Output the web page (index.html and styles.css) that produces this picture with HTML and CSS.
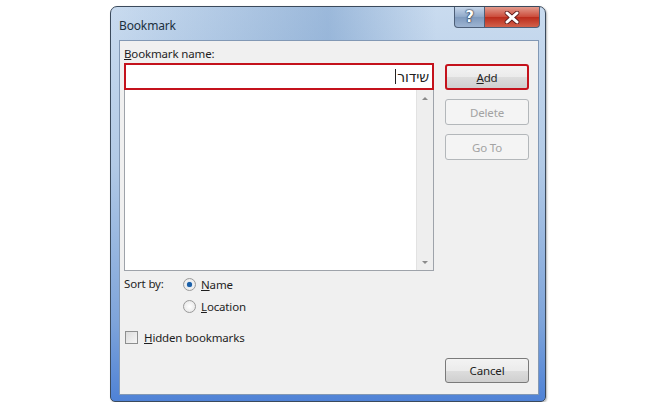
FILE: index.html
```html
<!DOCTYPE html>
<html lang="en">

<head>
  <meta charset="UTF-8" />
  <title>Bookmark</title>
  <link rel="stylesheet" href="styles.css">
</head>

<body>
  <div class="window">
    <!-- title bar -->
    <div class="titlebar">
      <span class="title">Bookmark</span>
      <div class="caption-btns">
        <div class="cap-btn help">?</div>
        <div class="cap-btn close">
          <svg width="16" height="13" viewBox="0 0 16 13">
            <path d="M3 2 L13 11 M13 2 L3 11" stroke="#5a1b1b" stroke-width="4.6" stroke-linecap="round" />
            <path d="M3 2 L13 11 M13 2 L3 11" stroke="#ffffff" stroke-width="3" stroke-linecap="round" />
          </svg>
        </div>
      </div>
    </div>

    <div class="client">
      <div class="main">
        <div class="left">
          <div class="label"><u>B</u>ookmark name:</div>
          <div class="name-box highlight">
            <span class="caret"></span><span dir="rtl">שידור</span>
          </div>
          <div class="list-box">
            <div class="scrollbar">
              <span class="arrow up"></span>
              <span class="arrow down"></span>
            </div>
          </div>

          <div class="sort">
            <span class="sort-label">Sort by:</span>
            <div class="radios">
              <label class="radio"><span class="dot checked"></span><span><u>N</u>ame</span></label>
              <label class="radio"><span class="dot"></span><span><u>L</u>ocation</span></label>
            </div>
          </div>

          <label class="check"><span class="box"></span><span><u>H</u>idden bookmarks</span></label>
        </div>

        <div class="right">
          <button class="btn highlight"><u>A</u>dd</button>
          <button class="btn disabled">Delete</button>
          <button class="btn disabled">Go To</button>
        </div>
      </div>

      <div class="footer">
        <button class="btn">Cancel</button>
      </div>
    </div>
  </div>
</body>

</html>
```

FILE: styles.css
```css
* {
  margin: 0;
  padding: 0;
  box-sizing: border-box;
}

body {
  background-color: #ffffff;
  padding: 6px 0 0 110px;
  font-family: 'Noto Sans', 'DejaVu Sans', sans-serif;
  font-size: 11.5px;
  letter-spacing: -0.15px;
  color: #1e1e1e;
}

u {
  text-decoration: underline;
  text-underline-offset: 1px;
}

/* Window frame */
.window {
  width: 436px;
  height: 396px;
  border: 1px solid #3b4a5c;
  border-radius: 7px 7px 5px 5px;
  background: linear-gradient(to bottom, #c9dbef 0%, #b2cae6 40%, #7ea4da 80%, #4f82d6 100%);
  padding: 0 6px 6px 8px;
  display: flex;
  flex-direction: column;
  box-shadow: 1px 1px 2px rgba(0, 0, 0, 0.3);
}

.titlebar {
  height: 33px;
  display: flex;
  justify-content: space-between;
  align-items: flex-start;
  background: linear-gradient(to right, rgba(255, 255, 255, 0) 0%, rgba(70, 120, 180, 0.35) 50%, rgba(255, 255, 255, 0) 75%);
  margin: 0 -6px 0 -8px;
  padding: 0 6px 0 8px;
  border-radius: 6px 6px 0 0;
}

.title {
  margin-top: 10px;
  font-size: 12px;
  color: #20303e;
}

.caption-btns {
  display: flex;
}

.cap-btn {
  height: 21px;
  display: flex;
  align-items: center;
  justify-content: center;
  border: 1px solid #4d5f78;
  border-top: none;
}

.help {
  width: 31px;
  border-radius: 0 0 0 4px;
  background: linear-gradient(to bottom, #c6d6ea, #8fa8c8 50%, #7f9abd 51%, #9db4d2);
  color: #ffffff;
  font-family: 'DejaVu Sans', sans-serif;
  font-weight: bold;
  font-size: 15px;
  text-shadow: 0 0 2px #22334a, 0 0 1px #22334a, 0 0 1px #22334a;
}

.close {
  width: 55px;
  border-left: none;
  margin-right: -1px;
  border-radius: 0 0 4px 0;
  background: linear-gradient(to bottom, #e39b8d, #cb4b3a 50%, #bb2c1c 51%, #d2614b);
}

/* client area */
.client {
  flex: 1;
  background-color: #f0f0f0;
  border: 1px solid #8298b4;
  padding: 5px 9px 11px 4px;
  display: flex;
  flex-direction: column;
}

.main {
  display: flex;
  gap: 11px;
  flex: 1;
}

.left {
  width: 311px;
  display: flex;
  flex-direction: column;
}

.label {
  height: 17px;
}

.highlight {
  border: 2px solid #c4121c !important;
}

.name-box {
  height: 27px;
  background: #ffffff;
  display: flex;
  justify-content: flex-end;
  align-items: center;
  padding: 0 3px;
  font-size: 14px;
  color: #222;
}

.caret {
  width: 1px;
  height: 15px;
  background: #222;
  margin-right: 1px;
}

.list-box {
  height: 181px;
  background: #ffffff;
  border: 1px solid #9ea3aa;
  border-top: none;
  display: flex;
  justify-content: flex-end;
}

.scrollbar {
  width: 17px;
  background: #eeeeee;
  border-left: 1px solid #e2e2e2;
  display: flex;
  flex-direction: column;
  justify-content: space-between;
  align-items: center;
  padding: 7px 0 6px;
}

.arrow {
  width: 0;
  height: 0;
  border-left: 3px solid transparent;
  border-right: 3px solid transparent;
}

.arrow.up {
  border-bottom: 3px solid #8a8a8a;
}

.arrow.down {
  border-top: 3px solid #8a8a8a;
}

/* sort by radios */
.sort {
  display: flex;
  margin-top: 5px;
}

.sort-label {
  width: 59px;
}

.radios {
  display: flex;
  flex-direction: column;
  gap: 6px;
}

.radio,
.check {
  display: flex;
  align-items: center;
  gap: 5px;
  height: 16px;
}

.dot {
  width: 13px;
  height: 13px;
  border-radius: 50%;
  border: 1px solid #9a9a9a;
  background: radial-gradient(circle, #ffffff 0%, #e2e2e2 100%);
  display: flex;
  align-items: center;
  justify-content: center;
}

.dot.checked::after {
  content: "";
  width: 5px;
  height: 5px;
  border-radius: 50%;
  background: #1b5fa6;
  box-shadow: 0 0 1px #2a7ad0;
}

.check {
  margin-top: 15px;
  margin-left: 1px;
  gap: 6px;
}

.box {
  width: 13px;
  height: 13px;
  border: 1px solid #8e8f8f;
  background: linear-gradient(135deg, #dcdcdc, #f6f6f6);
}

/* buttons */
.right {
  display: flex;
  flex-direction: column;
  gap: 9px;
  padding-top: 18px;
}

.btn {
  width: 84px;
  height: 26px;
  font-family: inherit;
  font-size: 11.5px;
  letter-spacing: -0.15px;
  color: #1e1e1e;
  border: 1px solid #7a7a7a;
  border-radius: 3px;
  background: linear-gradient(to bottom, #f3f3f3 0%, #ebebeb 50%, #dddddd 51%, #cfcfcf 100%);
}

.btn.disabled {
  color: #a3a3a3;
  border-color: #b3b7ba;
  background: #f4f4f4;
}

.footer {
  display: flex;
  justify-content: flex-end;
}

.footer .btn {
  height: 25px;
}
```
